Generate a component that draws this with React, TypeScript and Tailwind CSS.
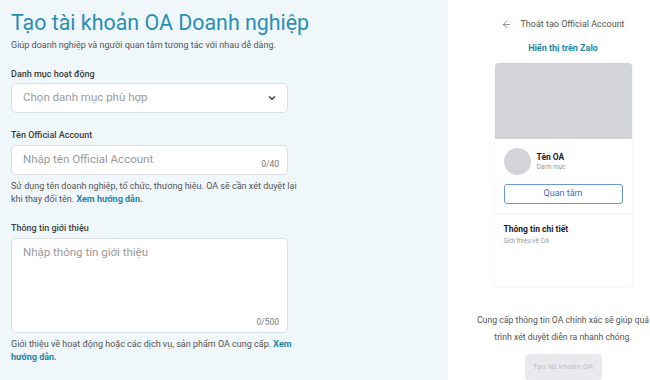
import { ChevronDown, ArrowLeft } from 'lucide-react'

const font = { fontFamily: 'Roboto, "Noto Sans", sans-serif' }

function Label({ children }: { children: React.ReactNode }) {
  return <div className="text-[9px] font-medium leading-[13px] text-[#3d3d3d]">{children}</div>
}

function FormPanel() {
  return (
    <div className="w-[448px] shrink-0 bg-[#eff7fb] px-[11px] pt-[9px]">
      <h1 className="text-[21.4px] leading-[28px] text-[#2b8fb3]">Tạo tài khoản OA Doanh nghiệp</h1>
      <p className="mt-[2px] text-[9px] leading-[13px] text-[#555]">Giúp doanh nghiệp và người quan tâm tương tác với nhau dễ dàng.</p>

      <div className="mt-[16px]">
        <Label>Danh mục hoạt động</Label>
        <div className="mt-[2px] flex h-[30px] w-[277px] items-center justify-between rounded-[5px] border border-[#dcdfe3] bg-white pl-[11px] pr-[10px]">
          <span className="text-[11.5px] text-[#9a9a9a]">Chọn danh mục phù hợp</span>
          <ChevronDown size={10} strokeWidth={3} className="text-[#333]" />
        </div>
      </div>

      <div className="mt-[16px]">
        <Label>Tên Official Account</Label>
        <div className="relative mt-[3px] h-[30px] w-[277px] rounded-[5px] border border-[#dcdfe3] bg-white">
          <span className="absolute left-[11px] top-[5px] text-[11.5px] text-[#9a9a9a]">Nhập tên Official Account</span>
          <span className="absolute bottom-[3px] right-[8px] text-[8.5px] text-[#777]">0/40</span>
        </div>
        <p className="mt-[5px] w-[290px] text-[9px] leading-[13px] text-[#555]">
          Sử dụng tên doanh nghiệp, tổ chức, thương hiệu. OA sẽ cần xét duyệt lại khi thay đổi tên.{' '}
          <span className="font-bold text-[#1e87a8]">Xem hướng dẫn.</span>
        </p>
      </div>

      <div className="mt-[16px]">
        <Label>Thông tin giới thiệu</Label>
        <div className="relative mt-[3px] h-[95px] w-[277px] rounded-[5px] border border-[#dcdfe3] bg-white">
          <span className="absolute left-[11px] top-[5px] text-[11.5px] text-[#9a9a9a]">Nhập thông tin giới thiệu</span>
          <span className="absolute bottom-[3px] right-[8px] text-[8.5px] text-[#777]">0/500</span>
        </div>
        <p className="mt-[5px] w-[285px] text-[9px] leading-[13px] text-[#555]">
          Giới thiệu về hoạt động hoặc các dịch vụ, sản phẩm OA cung cấp.{' '}
          <span className="font-bold text-[#1e87a8]">Xem hướng dẫn.</span>
        </p>
      </div>
    </div>
  )
}

function PreviewPanel() {
  return (
    <div className="flex w-[230px] shrink-0 flex-col items-center bg-white pt-[18px]">
      <div className="flex items-center gap-[8px] text-[9px] text-[#555]">
        <ArrowLeft size={11} strokeWidth={1.5} className="text-[#666]" />
        <span>Thoát tạo Official Account</span>
      </div>
      <div className="mt-[10px] text-[9px] font-bold text-[#1e87a8]">Hiển thị trên Zalo</div>

      <div className="mt-[8px] w-[137px] overflow-hidden rounded-[4px] bg-[#f7f7f9] shadow-[0_0_3px_rgba(0,0,0,0.08)]">
        <div className="h-[76px] bg-[#d3d3da]" />
        <div className="bg-white px-[9px] pb-[9px] pt-[9px]">
          <div className="flex items-center gap-[6px]">
            <div className="h-[27px] w-[27px] rounded-full bg-[#d3d3da]" />
            <div>
              <div className="text-[8.5px] font-bold leading-[11px] text-[#222]">Tên OA</div>
              <div className="text-[6.5px] leading-[9px] text-[#999]">Danh mục</div>
            </div>
          </div>
          <div className="mt-[9px] flex h-[20px] items-center justify-center rounded-[3px] border border-[#6d95d6] text-[9px] text-[#3b6fc4]">
            Quan tâm
          </div>
        </div>
        <div className="mt-[2px] h-[82px] bg-white px-[9px] pt-[9px]">
          <div className="text-[8.5px] font-bold leading-[11px] text-[#222]">Thông tin chi tiết</div>
          <div className="mt-[2px] text-[6.5px] leading-[9px] text-[#999]">Giới thiệu về OA</div>
        </div>
      </div>

      <p className="mt-[25px] w-[230px] text-center text-[8.7px] leading-[17px] text-[#555]">
        Cung cấp thông tin OA chính xác sẽ giúp quá
        <br />
        trình xét duyệt diễn ra nhanh chóng.
      </p>
      <div className="mt-[8px] flex h-[26px] w-[77px] shrink-0 items-center justify-center rounded-[4px] bg-[#e9e9ee] text-[8px] text-[#c2c2ca]">
        Tạo tài khoản OA
      </div>
    </div>
  )
}

export default function App() {
  return (
    <div className="flex h-[380px] w-[650px] overflow-hidden" style={font}>
      <FormPanel />
      <PreviewPanel />
    </div>
  )
}
